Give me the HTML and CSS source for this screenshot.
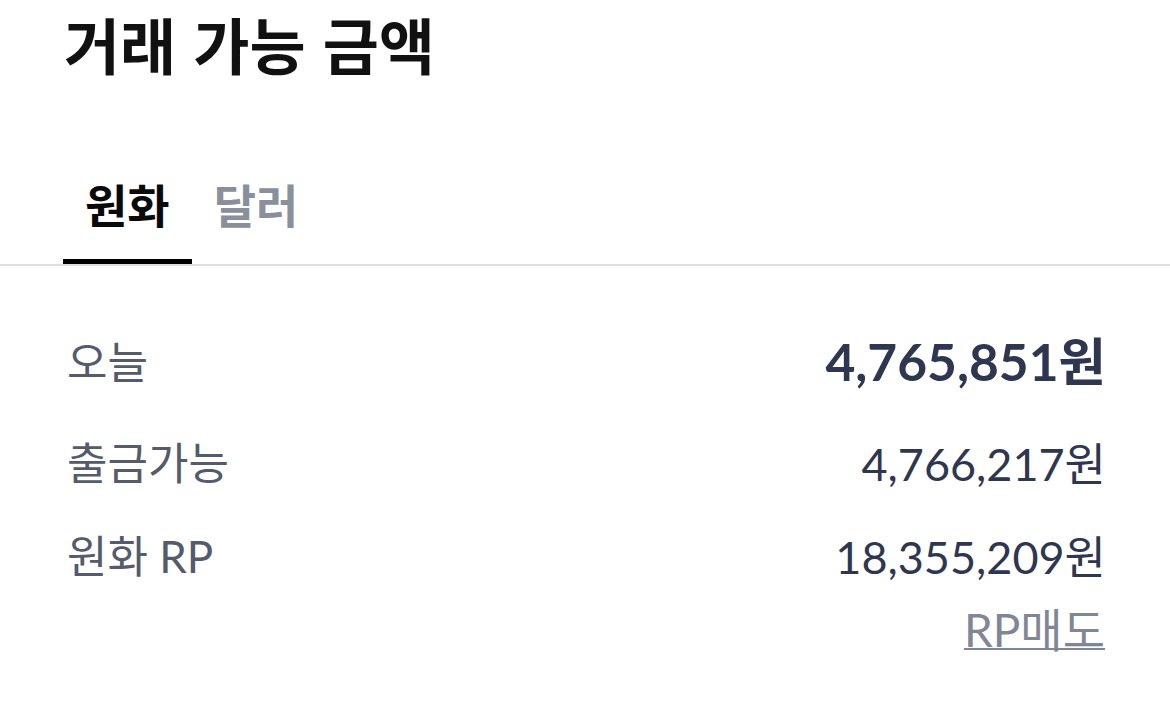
FILE: index.html
```html
<!DOCTYPE html>
<html lang="ko">
<head>
<meta charset="utf-8">
<link rel="stylesheet" href="styles.css">
</head>
<body>
<div class="page">
  <h1 class="title">거래 가능 금액</h1>
  <div class="tabs">
    <div class="tab active">원화</div>
    <div class="tab">달러</div>
  </div>
  <div class="rows">
    <div class="row row-main">
      <span class="label">오늘</span>
      <span class="value strong">4,765,851원</span>
    </div>
    <div class="row">
      <span class="label">출금가능</span>
      <span class="value">4,766,217원</span>
    </div>
    <div class="row">
      <span class="label">원화 RP</span>
      <span class="value">18,355,209원</span>
    </div>
    <div class="link-row">
      <a class="link" href="#">RP매도</a>
    </div>
  </div>
</div>
</body>
</html>
```
FILE: styles.css
```css
html, body {
  margin: 0;
  padding: 0;
  background: #ffffff;
}
body {
  font-family: Lato, "Noto Sans CJK KR", sans-serif;
  width: 1170px;
  height: 711px;
  overflow: hidden;
}
.page {
  display: flex;
  flex-direction: column;
}
.title {
  margin: 0;
  padding: 0 0 0 64px;
  height: 88px;
  line-height: 88px;
  font-size: 61px;
  font-weight: 700;
  color: #111111;
  font-family: "Noto Sans CJK KR", sans-serif;
}
.tabs {
  display: flex;
  margin-top: 64px;
  padding-left: 63px;
  border-bottom: 2px solid #dedede;
}
.tab {
  font-family: "Noto Sans CJK KR", sans-serif;
  font-size: 46px;
  font-weight: 700;
  color: #8a909b;
  height: 112px;
  line-height: 103px;
  padding: 0 22px;
  box-sizing: border-box;
}
.tab.active {
  color: #0a0a0a;
  border-bottom: 5px solid #000;
}
.rows {
  display: flex;
  flex-direction: column;
  padding: 41px 64px 0 67px;
}
.row {
  display: flex;
  justify-content: space-between;
  align-items: center;
  height: 93px;
}
.row.row-main {
  height: 110px;
}
.label {
  font-size: 44px;
  line-height: 1.2;
  color: #535b6c;
}
.value {
  font-size: 45px;
  line-height: 1.2;
  color: #2f3650;
}
.value.strong {
  font-size: 51.5px;
  font-weight: 700;
}
.link-row {
  display: flex;
  justify-content: flex-end;
  height: 45px;
  line-height: 45px;
  padding-top: 4px;
  padding-right: 1px;
}
.link {
  font-size: 46px;
  color: #7f8695;
  text-decoration: underline;
  text-decoration-thickness: 2px;
  text-underline-offset: 1px;
}
```
